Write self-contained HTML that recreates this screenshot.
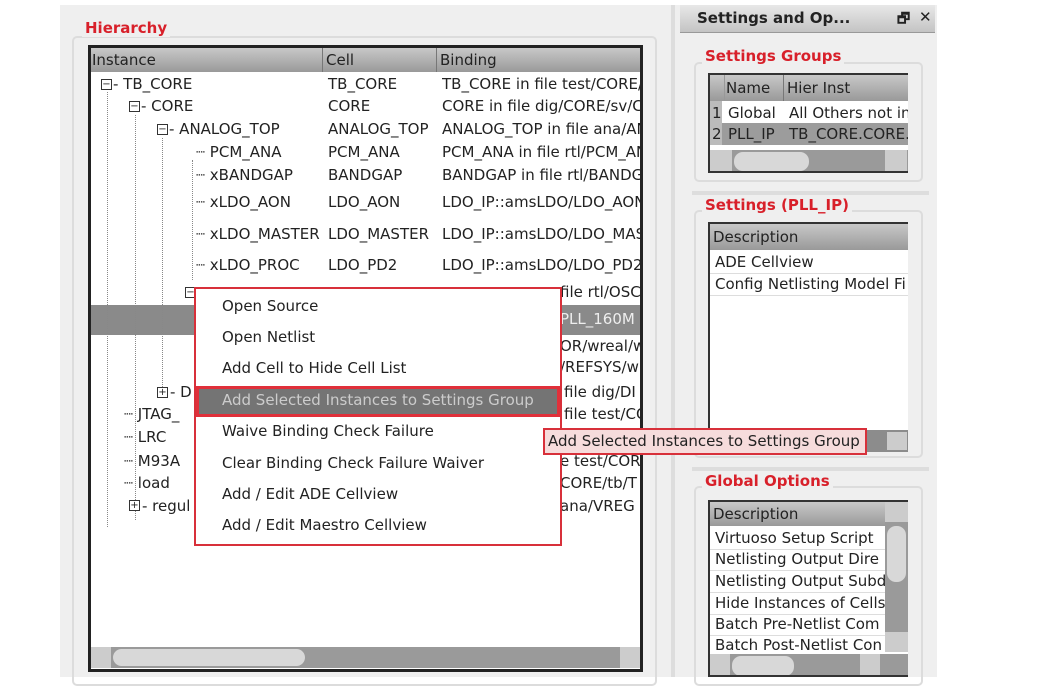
<!DOCTYPE html>
<html><head><meta charset="utf-8"><style>
*{margin:0;padding:0;box-sizing:border-box}
body{width:1041px;height:677px;background:#fff;position:relative;overflow:hidden;font-family:"DejaVu Sans","Liberation Sans",sans-serif;font-size:15px;color:#222}
.a{position:absolute;white-space:nowrap}
.red{color:#d8202a;font-weight:bold;font-size:15px}
.gb{position:absolute;border:2px solid #dcdcdc;border-radius:5px}
.hdr{background:linear-gradient(#c8c8c8,#999);}
.tl{position:absolute;border-left:1px dotted #888}
.box{position:absolute;width:11px;height:11px;border:1px solid #333;background:#fff;font-size:10px;line-height:9px;text-align:center}
</style></head><body>
<div class="a" style="left:60px;top:5px;width:605px;height:672px;background:#efefef"></div>
<div class="gb" style="left:72px;top:36px;width:585px;height:650px"></div>
<div class="a red" style="left:82px;top:19px;background:#efefef;padding:0 3px">Hierarchy</div>
<div class="a" style="left:88px;top:45px;width:555px;height:627px;background:#fff;border:3px solid #222"></div>
<div class="a hdr" style="left:91px;top:48px;width:549px;height:24px"></div>
<div class="a" style="left:322px;top:48px;width:1px;height:24px;background:#777"></div>
<div class="a" style="left:436px;top:48px;width:1px;height:24px;background:#777"></div>
<div class="a" style="left:92px;top:51px">Instance</div>
<div class="a" style="left:326px;top:51px">Cell</div>
<div class="a" style="left:440px;top:51px">Binding</div>
<div class="a" style="left:91px;top:305px;width:549px;height:30px;background:#8a8a8a"></div>
<div class="tl" style="left:107px;top:92px;height:435px"></div>
<div class="tl" style="left:135px;top:115px;height:405px"></div>
<div class="tl" style="left:162px;top:138px;height:255px"></div>
<div class="tl" style="left:192px;top:160px;height:120px"></div>
<div class="box" style="left:101px;top:79px">−</div>
<div class="box" style="left:129px;top:101px">−</div>
<div class="box" style="left:157px;top:124px">−</div>
<div class="box" style="left:185px;top:287px">−</div>
<div class="box" style="left:157px;top:387px">+</div>
<div class="box" style="left:129px;top:500px">+</div>
<div class="a" style="left:113px;top:75px">- TB_CORE</div>
<div class="a" style="left:141px;top:97px">- CORE</div>
<div class="a" style="left:169px;top:120px">- ANALOG_TOP</div>
<div class="a" style="left:196px;top:143px">┈ PCM_ANA</div>
<div class="a" style="left:196px;top:166px">┈ xBANDGAP</div>
<div class="a" style="left:196px;top:193px">┈ xLDO_AON</div>
<div class="a" style="left:196px;top:225px">┈ xLDO_MASTER</div>
<div class="a" style="left:196px;top:256px">┈ xLDO_PROC</div>
<div class="a" style="left:170px;top:383px">- D</div>
<div class="a" style="left:124px;top:405px">┈ JTAG_</div>
<div class="a" style="left:124px;top:428px">┈ LRC</div>
<div class="a" style="left:124px;top:452px">┈ M93A</div>
<div class="a" style="left:124px;top:474px">┈ load</div>
<div class="a" style="left:142px;top:497px">- regul</div>
<div class="a" style="left:328px;top:75px">TB_CORE</div>
<div class="a" style="left:328px;top:97px">CORE</div>
<div class="a" style="left:328px;top:120px">ANALOG_TOP</div>
<div class="a" style="left:328px;top:143px">PCM_ANA</div>
<div class="a" style="left:328px;top:166px">BANDGAP</div>
<div class="a" style="left:328px;top:193px">LDO_AON</div>
<div class="a" style="left:328px;top:225px">LDO_MASTER</div>
<div class="a" style="left:328px;top:256px">LDO_PD2</div>
<div class="a" style="left:442px;top:75px;width:198px;overflow:hidden">TB_CORE in file test/CORE/</div>
<div class="a" style="left:442px;top:97px;width:198px;overflow:hidden">CORE in file dig/CORE/sv/CO</div>
<div class="a" style="left:442px;top:120px;width:198px;overflow:hidden">ANALOG_TOP in file ana/AN</div>
<div class="a" style="left:442px;top:143px;width:198px;overflow:hidden">PCM_ANA in file rtl/PCM_AN</div>
<div class="a" style="left:442px;top:166px;width:198px;overflow:hidden">BANDGAP in file rtl/BANDG</div>
<div class="a" style="left:442px;top:193px;width:198px;overflow:hidden">LDO_IP::amsLDO/LDO_AON</div>
<div class="a" style="left:442px;top:225px;width:198px;overflow:hidden">LDO_IP::amsLDO/LDO_MAS</div>
<div class="a" style="left:442px;top:256px;width:198px;overflow:hidden">LDO_IP::amsLDO/LDO_PD2</div>
<div class="a" style="left:560px;top:283px;width:80px;overflow:hidden">file rtl/OSC</div>
<div class="a" style="left:560px;top:310px;color:#eee;width:80px;overflow:hidden">PLL_160M</div>
<div class="a" style="left:560px;top:337px;width:80px;overflow:hidden">OR/wreal/w</div>
<div class="a" style="left:560px;top:358px;width:80px;overflow:hidden">/REFSYS/w</div>
<div class="a" style="left:564px;top:383px;width:76px;overflow:hidden">file dig/DI</div>
<div class="a" style="left:564px;top:405px;width:76px;overflow:hidden">file test/CO</div>
<div class="a" style="left:560px;top:452px;width:80px;overflow:hidden">e test/COR</div>
<div class="a" style="left:560px;top:474px;width:80px;overflow:hidden">CORE/tb/T</div>
<div class="a" style="left:560px;top:497px;width:80px;overflow:hidden">ana/VREG</div>
<div class="a" style="left:91px;top:647px;width:549px;height:21px;background:#9a9a9a"></div>
<div class="a" style="left:113px;top:649px;width:192px;height:17px;background:#d8d8d8;border-radius:9px"></div>
<div class="a" style="left:91px;top:647px;width:20px;height:21px;background:#ccc"></div>
<div class="a" style="left:620px;top:647px;width:20px;height:21px;background:#ccc"></div>
<div class="a" style="left:194px;top:287px;width:368px;height:259px;background:#fff;border:2px solid #d8303a"></div>
<div class="a" style="left:196px;top:386px;width:364px;height:31px;background:#747474;border:3px solid #e0303a"></div>
<div class="a" style="left:222px;top:297px;font-size:15px">Open Source</div>
<div class="a" style="left:222px;top:328px;font-size:15px">Open Netlist</div>
<div class="a" style="left:222px;top:359px;font-size:15px">Add Cell to Hide Cell List</div>
<div class="a" style="left:222px;top:391px;font-size:15px;color:#ccc">Add Selected Instances to Settings Group</div>
<div class="a" style="left:222px;top:422px;font-size:15px">Waive Binding Check Failure</div>
<div class="a" style="left:222px;top:454px;font-size:15px">Clear Binding Check Failure Waiver</div>
<div class="a" style="left:222px;top:485px;font-size:15px">Add / Edit ADE Cellview</div>
<div class="a" style="left:222px;top:516px;font-size:15px">Add / Edit Maestro Cellview</div>
<div class="a" style="left:665px;top:5px;width:272px;height:672px;background:#efefef"></div>
<div class="a" style="left:671px;top:5px;width:4px;height:672px;background:#ddd"></div>
<div class="a" style="left:680px;top:5px;width:255px;height:28px;background:linear-gradient(#e8e8e8,#c4c4c4);border-bottom:1px solid #999"></div>
<div class="a" style="left:697px;top:9px;font-weight:bold;font-size:15px">Settings and Op...</div>
<div class="a" style="left:897px;top:8px;font-weight:bold;font-size:14px">🗗</div>
<div class="a" style="left:919px;top:8px;font-weight:bold;font-size:15px">✕</div>
<div class="gb" style="left:694px;top:62px;width:229px;height:120px"></div>
<div class="a red" style="left:702px;top:47px;background:#efefef;padding:0 3px">Settings Groups</div>
<div class="a" style="left:708px;top:73px;width:200px;height:100px;background:#fff;border:2px solid #333;border-right:none;overflow:hidden">
 <div class="a hdr" style="left:0;top:0;width:200px;height:26px"></div>
 <div class="a" style="left:73px;top:0;width:1px;height:26px;background:#777"></div>
 <div class="a" style="left:14px;top:0;width:1px;height:26px;background:#999"></div>
 <div class="a" style="left:16px;top:4px">Name</div>
 <div class="a" style="left:77px;top:4px">Hier Inst</div>
 <div class="a" style="left:0;top:26px;width:12px;height:44px;background:#bbb"></div>
 <div class="a" style="left:2px;top:29px">1</div><div class="a" style="left:18px;top:29px">Global</div><div class="a" style="left:79px;top:29px">All Others not in</div>
 <div class="a" style="left:12px;top:48px;width:190px;height:22px;background:#9c9c9c"></div>
 <div class="a" style="left:2px;top:50px">2</div><div class="a" style="left:18px;top:50px">PLL_IP</div><div class="a" style="left:79px;top:50px">TB_CORE.CORE.</div>
 <div class="a" style="left:0;top:75px;width:200px;height:23px;background:#9a9a9a"></div>
 <div class="a" style="left:24px;top:77px;width:75px;height:19px;background:#d8d8d8;border-radius:9px"></div>
 <div class="a" style="left:0;top:75px;width:22px;height:23px;background:#ccc"></div>
 <div class="a" style="left:175px;top:75px;width:22px;height:23px;background:#ccc"></div>
</div>
<div class="a" style="left:692px;top:191px;width:237px;height:4px;background:#ddd"></div>
<div class="gb" style="left:694px;top:210px;width:229px;height:248px"></div>
<div class="a red" style="left:702px;top:196px;background:#efefef;padding:0 3px">Settings (PLL_IP)</div>
<div class="a" style="left:708px;top:222px;width:200px;height:230px;background:#fff;border:2px solid #333;border-right:none;border-bottom:none;overflow:hidden">
 <div class="a hdr" style="left:0;top:0;width:200px;height:26px"></div>
 <div class="a" style="left:3px;top:4px">Description</div>
 <div class="a" style="left:5px;top:29px">ADE Cellview</div>
 <div class="a" style="left:0;top:49px;width:200px;height:1px;background:#ddd"></div>
 <div class="a" style="left:5px;top:51px">Config Netlisting Model Fi</div>
 <div class="a" style="left:0;top:71px;width:200px;height:1px;background:#ddd"></div>
 <div class="a" style="left:150px;top:206px;width:50px;height:22px;background:#8c8c8c"></div>
 <div class="a" style="left:177px;top:208px;width:20px;height:18px;background:#ccc"></div>
</div>
<div class="a" style="left:692px;top:467px;width:237px;height:4px;background:#ddd"></div>
<div class="gb" style="left:694px;top:486px;width:229px;height:200px"></div>
<div class="a red" style="left:702px;top:472px;background:#efefef;padding:0 3px">Global Options</div>
<div class="a" style="left:708px;top:500px;width:200px;height:177px;background:#fff;border:2px solid #333;border-right:none;overflow:hidden">
 <div class="a hdr" style="left:0;top:0;width:200px;height:24px"></div>
 <div class="a" style="left:3px;top:3px">Description</div>
 <div class="a" style="left:5px;top:27px">Virtuoso Setup Script</div>
 <div class="a" style="left:5px;top:48px">Netlisting Output Dire</div>
 <div class="a" style="left:5px;top:70px">Netlisting Output Subd</div>
 <div class="a" style="left:5px;top:92px">Hide Instances of Cells</div>
 <div class="a" style="left:5px;top:113px">Batch Pre-Netlist Com</div>
 <div class="a" style="left:5px;top:134px">Batch Post-Netlist Con</div>
 <div class="a" style="left:0;top:47px;width:175px;height:1px;background:#ddd"></div>
 <div class="a" style="left:0;top:68px;width:175px;height:1px;background:#ddd"></div>
 <div class="a" style="left:0;top:90px;width:175px;height:1px;background:#ddd"></div>
 <div class="a" style="left:0;top:112px;width:175px;height:1px;background:#ddd"></div>
 <div class="a" style="left:0;top:133px;width:175px;height:1px;background:#ddd"></div>
 <div class="a" style="left:175px;top:0;width:23px;height:150px;background:#9a9a9a"></div>
 <div class="a" style="left:175px;top:0;width:23px;height:20px;background:#ccc"></div>
 <div class="a" style="left:177px;top:24px;width:19px;height:56px;background:#d8d8d8;border-radius:9px"></div>
 <div class="a" style="left:175px;top:130px;width:23px;height:20px;background:#ccc"></div>
 <div class="a" style="left:0;top:152px;width:200px;height:25px;background:#9a9a9a"></div>
 <div class="a" style="left:22px;top:154px;width:62px;height:20px;background:#d8d8d8;border-radius:9px"></div>
 <div class="a" style="left:0;top:152px;width:20px;height:23px;background:#ccc"></div>
 <div class="a" style="left:150px;top:152px;width:20px;height:23px;background:#ccc"></div>
</div>
<div class="a" style="left:543px;top:428px;width:324px;height:27px;background:#f6dcdc;border:2px solid #d8303a;padding:2px 3px;font-size:15px">Add Selected Instances to Settings Group</div>
</body></html>
